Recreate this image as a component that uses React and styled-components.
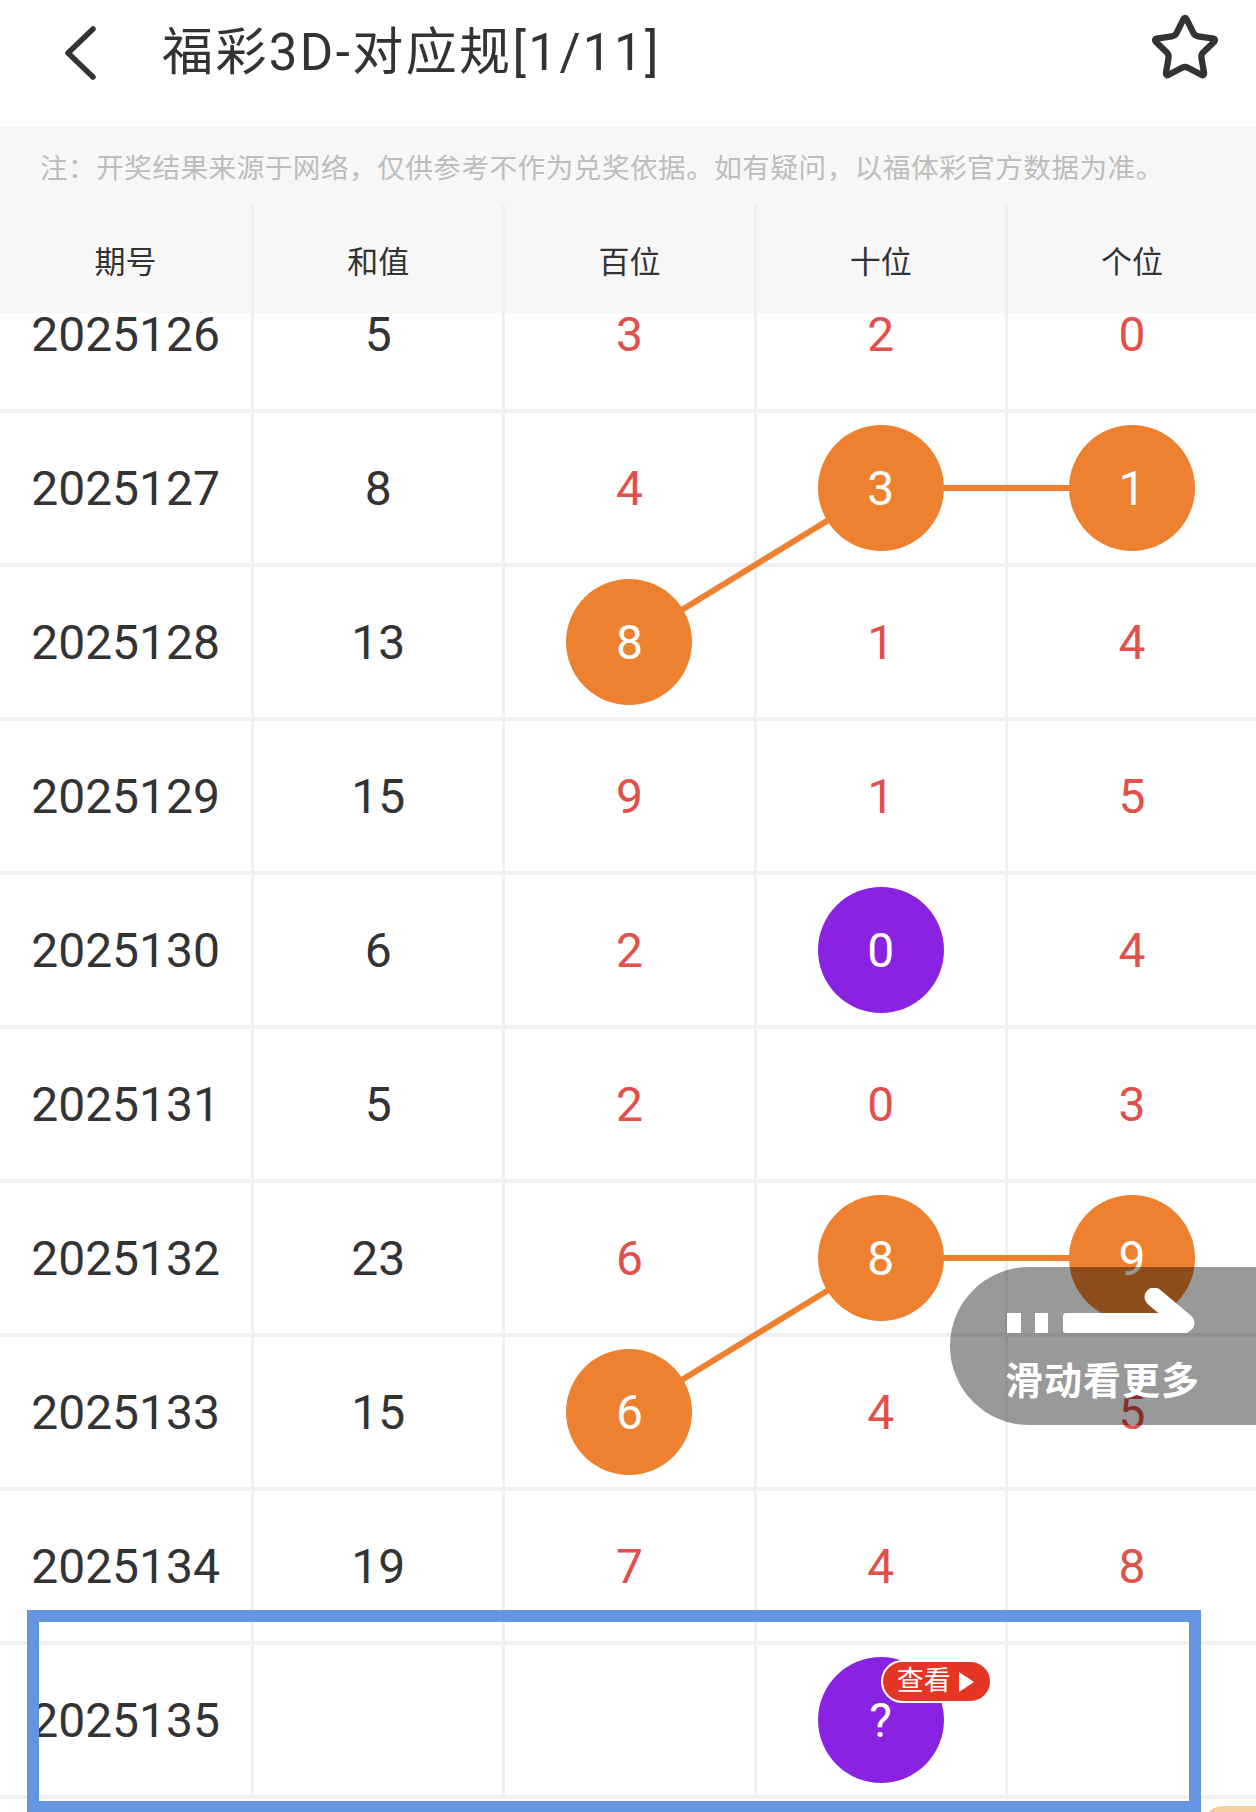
import React from 'react';
import styled, { createGlobalStyle } from 'styled-components';
import { Star } from 'lucide-react';

const COL_W = 1256 / 5;
const ROW_H = 154;
const ORANGE = '#ee8130';
const PURPLE = '#8a22e2';
const RED = '#e2504c';

const colCenter = (c) => (c === 0 ? COL_W / 2 : c * COL_W + 1.5 + COL_W / 2);
const rowCenter = (r) => r * ROW_H + 75;

// 期号, 和值, 百十个; balls: col index -> tone
const rows = [
  { no: '2025126', sum: '5', nums: ['3', '2', '0'] },
  { no: '2025127', sum: '8', nums: ['4', '3', '1'], balls: { 1: 'orange', 2: 'orange' } },
  { no: '2025128', sum: '13', nums: ['8', '1', '4'], balls: { 0: 'orange' } },
  { no: '2025129', sum: '15', nums: ['9', '1', '5'] },
  { no: '2025130', sum: '6', nums: ['2', '0', '4'], balls: { 1: 'purple' } },
  { no: '2025131', sum: '5', nums: ['2', '0', '3'] },
  { no: '2025132', sum: '23', nums: ['6', '8', '9'], balls: { 1: 'orange', 2: 'orange' } },
  { no: '2025133', sum: '15', nums: ['6', '4', '5'], balls: { 0: 'orange' } },
  { no: '2025134', sum: '19', nums: ['7', '4', '8'] },
  { no: '2025135', sum: '', nums: ['', '?', ''], balls: { 1: 'purple' }, pending: true },
];

// [row, col] pairs on the full 5-column grid
const links = [
  [[1, 3], [1, 4]],
  [[2, 2], [1, 3]],
  [[6, 3], [6, 4]],
  [[7, 2], [6, 3]],
];

const GlobalStyle = createGlobalStyle`
  html, body {
    margin: 0;
    padding: 0;
    background: #fff;
  }
  body {
    font-family: Roboto, "Noto Sans CJK SC", "Noto Sans", sans-serif;
    color: #333;
  }
  * { box-sizing: border-box; }
`;

const Page = styled.div`
  position: relative;
  width: 1256px;
  height: 1812px;
  overflow: hidden;
  display: flex;
  flex-direction: column;
  background: #fff;
`;

const TopBar = styled.div`
  flex: none;
  height: 127px;
  padding: 0 35px 23px 60px;
  display: flex;
  align-items: center;
`;

const BackButton = styled.svg`
  flex: none;
  width: 40px;
  height: 60px;
`;

const Title = styled.div`
  margin-left: 62px;
  font-size: 51px;
  line-height: 1;
  letter-spacing: 2.4px;
  color: #333;
  white-space: nowrap;
`;

const StarButton = styled.div`
  margin-left: auto;
  display: flex;
  color: #333;
  margin-top: -8px;
`;

const Notice = styled.div`
  flex: none;
  height: 78px;
  padding-left: 40px;
  display: flex;
  align-items: center;
  background: #f7f7f7;
  color: #bdbdbd;
  font-size: 27.6px;
  letter-spacing: 0.5px;
  white-space: nowrap;
`;

const HeaderRow = styled.div`
  flex: none;
  display: grid;
  grid-template-columns: repeat(5, 1fr);
  height: 108px;
  background: #f7f7f7;
`;

const HeadCell = styled.div`
  display: flex;
  align-items: center;
  justify-content: center;
  font-size: 31px;
  color: #333;
  & + & {
    border-left: 3px solid #efefef;
  }
`;

const Body = styled.div`
  flex: 1;
  overflow: hidden;
`;

const BodyInner = styled.div`
  position: relative;
  margin-top: -54px;
`;

const Grid = styled.div`
  display: grid;
  grid-template-columns: repeat(5, 1fr);
`;

const Cell = styled.div`
  height: ${ROW_H}px;
  display: flex;
  align-items: center;
  justify-content: center;
  border-bottom: 4px solid #f0f0f0;
  font-size: 48px;
  color: ${(p) => (p.$red ? RED : '#333')};
  &:not(:nth-child(5n + 1)) {
    border-left: 3px solid #f0f0f0;
  }
`;

const Lines = styled.svg`
  position: absolute;
  top: 0;
  left: 0;
  z-index: 1;
  pointer-events: none;
`;

const Ball = styled.div`
  position: relative;
  z-index: 2;
  width: 126px;
  height: 126px;
  border-radius: 50%;
  background: ${(p) => (p.$tone === 'purple' ? PURPLE : ORANGE)};
  color: #fff;
  display: flex;
  align-items: center;
  justify-content: center;
  font-size: 48px;
`;

const Badge = styled.div`
  position: absolute;
  left: 63px;
  top: 3px;
  width: 111px;
  height: 43px;
  border-radius: 22px;
  border: 2px solid #fff;
  background: #e53525;
  color: #fff;
  display: flex;
  align-items: center;
  justify-content: center;
  gap: 8px;
  font-size: 27px;
  line-height: 1;
  padding-right: 2px;
`;

const Triangle = styled.span`
  width: 0;
  height: 0;
  border-top: 10px solid transparent;
  border-bottom: 10px solid transparent;
  border-left: 15px solid #fff;
`;

const SwipeHint = styled.div`
  position: absolute;
  left: 950px;
  right: 0;
  top: 1267px;
  height: 158px;
  border-radius: 79px 0 0 79px;
  background: rgba(0, 0, 0, 0.4);
  z-index: 5;
  padding: 21px 0 0 55px;
  display: flex;
  flex-direction: column;
  align-items: flex-start;
`;

const SwipeIcon = styled.svg`
  width: 192px;
  height: 48px;
`;

const SwipeText = styled.div`
  margin-top: 26px;
  color: #fff;
  font-size: 38px;
  font-weight: 700;
  line-height: 1;
  letter-spacing: 1px;
  white-space: nowrap;
`;

const Focus = styled.div`
  position: absolute;
  left: 27px;
  top: 1610px;
  width: 1174px;
  height: 203px;
  border: 12px solid #6495e0;
  z-index: 4;
  pointer-events: none;
`;

const FloatTab = styled.div`
  position: absolute;
  left: 1203px;
  top: 1806px;
  width: 80px;
  height: 40px;
  border-radius: 20px;
  background: #f6cda2;
  z-index: 4;
`;

function NumberCell({ value, tone, pending }) {
  if (tone) {
    return (
      <Cell>
        <Ball $tone={tone}>
          {value}
          {pending && (
            <Badge>
              查看
              <Triangle />
            </Badge>
          )}
        </Ball>
      </Cell>
    );
  }
  return <Cell $red>{value}</Cell>;
}

export default function App() {
  const height = rows.length * ROW_H;
  return (
    <>
      <GlobalStyle />
      <Page>
        <TopBar>
          <BackButton viewBox="0 0 40 60">
            <polyline
              points="33,7 8,31 33,55"
              fill="none"
              stroke="#333"
              strokeWidth="5.5"
              strokeLinecap="round"
              strokeLinejoin="round"
            />
          </BackButton>
          <Title>福彩3D-对应规[1/11]</Title>
          <StarButton>
            <Star size={72} strokeWidth={2.1} />
          </StarButton>
        </TopBar>

        <Notice>注：开奖结果来源于网络，仅供参考不作为兑奖依据。如有疑问，以福体彩官方数据为准。</Notice>

        <HeaderRow>
          {['期号', '和值', '百位', '十位', '个位'].map((h) => (
            <HeadCell key={h}>{h}</HeadCell>
          ))}
        </HeaderRow>

        <Body>
          <BodyInner>
            <Lines width={1256} height={height}>
              {links.map(([[r1, c1], [r2, c2]], i) => (
                <line
                  key={i}
                  x1={colCenter(c1)}
                  y1={rowCenter(r1)}
                  x2={colCenter(c2)}
                  y2={rowCenter(r2)}
                  stroke={ORANGE}
                  strokeWidth="6"
                />
              ))}
            </Lines>
            <Grid>
              {rows.map((row) => (
                <React.Fragment key={row.no}>
                  <Cell>{row.no}</Cell>
                  <Cell>{row.sum}</Cell>
                  {row.nums.map((n, i) => (
                    <NumberCell
                      key={i}
                      value={n}
                      tone={row.balls && row.balls[i]}
                      pending={row.pending}
                    />
                  ))}
                </React.Fragment>
              ))}
            </Grid>
          </BodyInner>
        </Body>

        <SwipeHint>
          <SwipeIcon viewBox="0 0 192 48">
            <rect x="2" y="25" width="14" height="20" fill="#fff" />
            <rect x="30" y="25" width="13" height="20" fill="#fff" />
            <rect x="58" y="25" width="126" height="20" rx="3" fill="#fff" />
            <line
              x1="149"
              y1="9"
              x2="180"
              y2="35"
              stroke="#fff"
              strokeWidth="19"
              strokeLinecap="round"
            />
          </SwipeIcon>
          <SwipeText>滑动看更多</SwipeText>
        </SwipeHint>

        <Focus />
        <FloatTab />
      </Page>
    </>
  );
}
